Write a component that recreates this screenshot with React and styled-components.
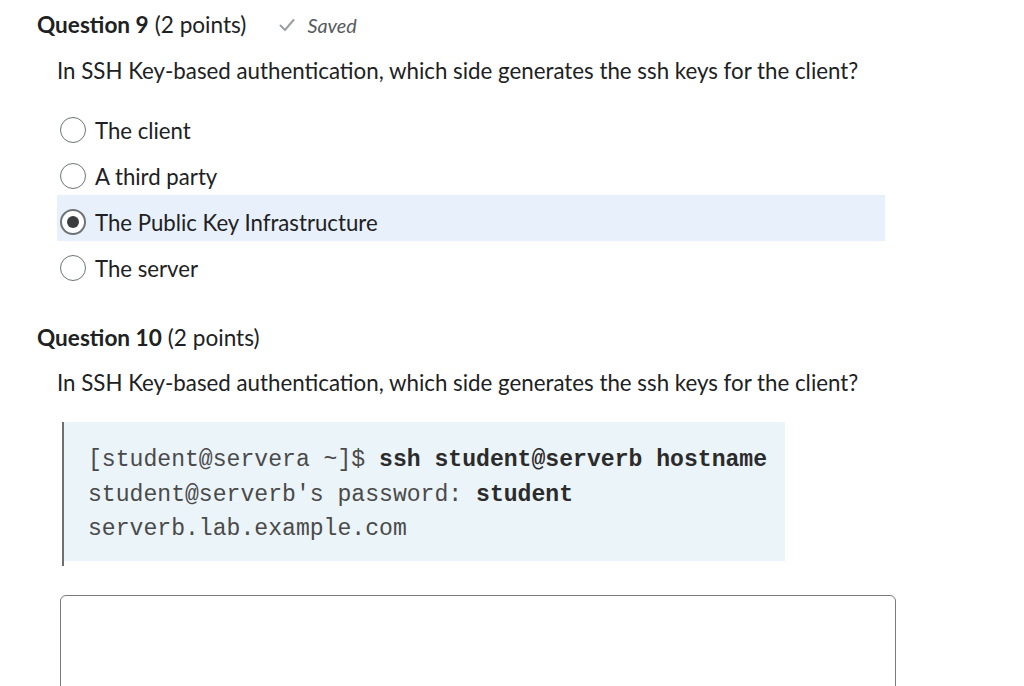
import React from "react";
import styled, { createGlobalStyle } from "styled-components";

const GlobalStyle = createGlobalStyle`
  body {
    margin: 0;
    background: #ffffff;
    font-family: Lato, "Open Sans", sans-serif;
    color: #202122;
  }
`;

const Page = styled.div`
  padding: 10px 0 0 37px;
  width: 900px;
  height: 686px;
  overflow: hidden;
  box-sizing: border-box;
`;

const Question = styled.section`
  margin-bottom: ${(p) => p.$gap || 0}px;
`;

const Header = styled.div`
  display: flex;
  align-items: center;
  height: 30px;
  font-size: 22.6px;
  line-height: 30px;
`;

const Title = styled.strong`
  font-weight: 700;
`;

const Points = styled.span`
  margin-left: 6px;
`;

const SavedTag = styled.span`
  display: flex;
  align-items: center;
  margin-left: 33px;
  font-size: 19.8px;
  font-style: italic;
  color: #565a5c;
  gap: 12px;
`;

const Prompt = styled.p`
  margin: 0;
  padding: ${(p) => p.$top}px 0 0 20px;
  font-size: 22.3px;
  line-height: 28px;
`;

const Options = styled.div`
  display: flex;
  flex-direction: column;
  margin: 18px 0 0 20px;
  width: 828px;
`;

const Option = styled.label`
  display: flex;
  align-items: center;
  height: 46px;
  box-sizing: border-box;
  padding: 8px 0 0 3px;
  gap: 9px;
  font-size: 22.2px;
  background: ${(p) => (p.$selected ? "#e8f0fb" : "transparent")};
`;

const Radio = styled.span`
  width: 26px;
  height: 26px;
  border-radius: 50%;
  box-sizing: border-box;
  border: ${(p) => (p.$checked ? "2px solid #6e7376" : "1px solid #6e7376")};
  background: #ffffff;
  flex-shrink: 0;
  display: flex;
  align-items: center;
  justify-content: center;
`;

const Dot = styled.span`
  width: 12px;
  height: 12px;
  border-radius: 50%;
  background: #3a3c3e;
`;

const CodeWrap = styled.div`
  margin: 25px 0 0 25px;
  border-left: 2px solid #6f6f6f;
  height: 144px;
  width: 721px;
`;

const CodeBlock = styled.pre`
  margin: 0;
  height: 139px;
  box-sizing: border-box;
  padding: 21px 0 0 24px;
  background: #ebf4f9;
  font-family: "Liberation Mono", "DejaVu Sans Mono", monospace;
  font-size: 23.1px;
  line-height: 34.5px;
  color: #4a4a4a;
`;

const Bold = styled.b`
  color: #2b2b2b;
  font-weight: 700;
`;

const Answer = styled.div`
  margin: 29px 0 0 23px;
  width: 836px;
  height: 120px;
  box-sizing: border-box;
  border: 1.5px solid #7a7a7a;
  border-radius: 6px;
`;

const options = [
  "The client",
  "A third party",
  "The Public Key Infrastructure",
  "The server",
];

const prompt =
  "In SSH Key-based authentication, which side generates the ssh keys for the client?";

export default function App() {
  return (
    <>
      <GlobalStyle />
      <Page>
        <Question $gap={36}>
          <Header>
            <Title>Question 9</Title>
            <Points>(2 points)</Points>
            <SavedTag>
              <svg width="16" height="14" viewBox="0 0 16 14">
                <path d="M1.5 7.5 L6 12 L14.5 2" fill="none" stroke="#9aa0a3" strokeWidth="2" strokeLinecap="round" strokeLinejoin="round" />
              </svg>
              Saved
            </SavedTag>
          </Header>
          <Prompt $top={17}>{prompt}</Prompt>
          <Options>
            {options.map((o, i) => (
              <Option key={i} $selected={i === 2}>
                <Radio $checked={i === 2}>{i === 2 && <Dot />}</Radio>
                {o}
              </Option>
            ))}
          </Options>
        </Question>
        <Question>
          <Header>
            <Title>Question 10</Title>
            <Points>(2 points)</Points>
          </Header>
          <Prompt $top={16}>{prompt}</Prompt>
          <CodeWrap>
            <CodeBlock>
              {"[student@servera ~]$ "}
              <Bold>ssh student@serverb hostname</Bold>
              {"\nstudent@serverb's password: "}
              <Bold>student</Bold>
              {"\nserverb.lab.example.com"}
            </CodeBlock>
          </CodeWrap>
          <Answer />
        </Question>
      </Page>
    </>
  );
}
